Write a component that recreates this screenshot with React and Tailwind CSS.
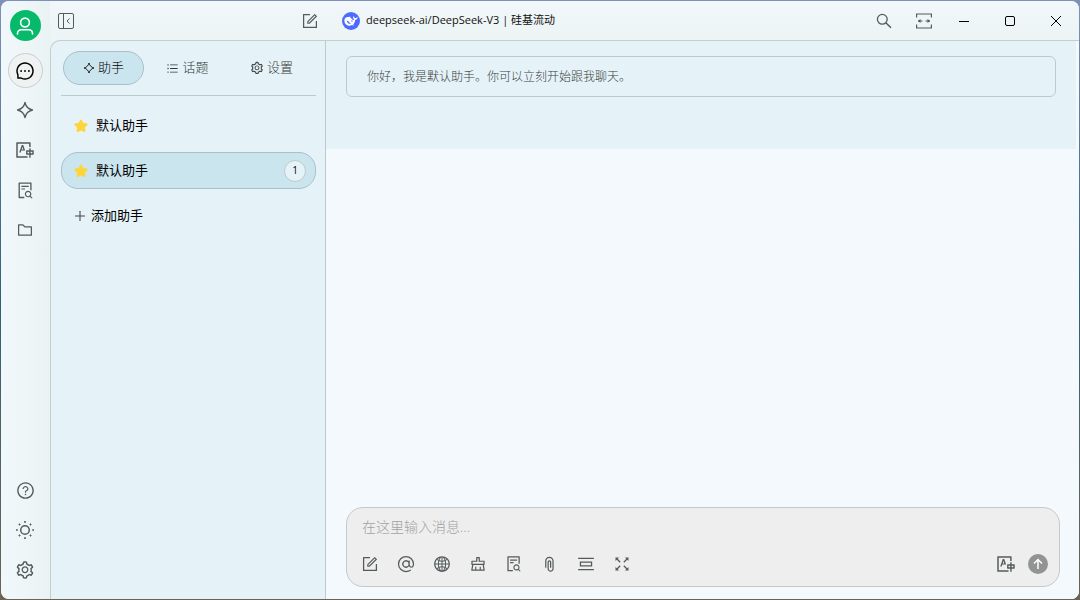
import React, { useState } from 'react';
import {
  AiOutlineMessage,
  AiOutlineTranslation,
  AiOutlineFileSearch,
  AiOutlineFolder,
  AiOutlineQuestionCircle,
  AiOutlineSetting,
  AiOutlineForm,
  AiOutlineUnorderedList,
  AiOutlinePlus,
  AiOutlineGlobal,
  AiOutlineClear,
  AiOutlinePaperClip,
  AiOutlinePicCenter,
} from 'react-icons/ai';
import { PiAt } from 'react-icons/pi';

const SparkleIcon = ({ size = 18 }) => (
  <svg width={size} height={size} viewBox="0 0 18 18" fill="none" stroke="currentColor" strokeWidth="1.3" strokeLinejoin="round">
    <path d="M9 1.5C9.800 5.200 12.800 8.200 16.500 9c-3.700.8-6.700 3.800-7.500 7.500C8.200 12.800 5.200 9.800 1.500 9 5.200 8.200 8.200 5.200 9 1.500z" />
  </svg>
);

const UserIcon = () => (
  <svg width="18" height="18" viewBox="0 0 18 18" fill="none" stroke="currentColor" strokeWidth="1.6" strokeLinecap="round">
    <circle cx="9" cy="5.500" r="4.400" />
    <path d="M1.500 17v-.5c0-2.300 1.600-3.700 3.800-3.700h7.400c2.200 0 3.800 1.400 3.800 3.700v.5" />
  </svg>
);

const SunIcon = () => (
  <svg width="20" height="20" viewBox="0 0 20 20" fill="none" stroke="currentColor" strokeWidth="1.500">
    <circle cx="10" cy="10" r="4.300" />
    <path d="M10 1v1.800M10 17.200V19M1 10h1.800M17.200 10H19M3.900 3.900l1.200 1.200M14.900 14.900l1.200 1.200M3.900 16.100l1.200-1.200M14.900 5.100l1.200-1.200" strokeWidth="1.700" />
  </svg>
);

const PanelIcon = () => (
  <svg width="16" height="16" viewBox="0 0 16 16" fill="none" stroke="currentColor" strokeWidth="1">
    <rect x=".5" y=".5" width="15" height="15" rx="1.500" />
    <path d="M5.500 .5v15M11.500 5.500L9 8l2.500 2.500" />
  </svg>
);

const SearchIcon = () => (
  <svg width="16" height="16" viewBox="0 0 16 16" fill="none" stroke="currentColor" strokeWidth="1.300">
    <circle cx="6.300" cy="6.300" r="4.900" />
    <path d="M9.800 9.800l5.200 5" strokeWidth="1.500" />
  </svg>
);

const WidthIcon = () => (
  <svg width="16" height="16" viewBox="0 0 16 16" fill="none" stroke="currentColor" strokeWidth="1.200">
    <path d="M.6 4.500v-3.500h14.800v3.500M.6 11.500V15h14.800v-3.500M2 8h4.500M9.500 8H14" />
    <path d="M4.500 6L1.800 8l2.700 2zM11.500 6l2.700 2-2.700 2z" fill="currentColor" stroke="none" />
  </svg>
);

const ExpandIcon = () => (
  <svg width="16" height="16" viewBox="0 0 16 16" fill="none" stroke="currentColor" strokeWidth="1.300">
    <path d="M3 3l3.200 3.200M13 3L9.800 6.200M3 13l3.200-3.200M13 13L9.800 9.800" />
    <path d="M1.500 1.500h3.600L1.500 5.100zM14.500 1.500v3.600l-3.600-3.600zM1.500 14.500v-3.600l3.600 3.600zM14.500 14.500h-3.600l3.600-3.600z" fill="currentColor" stroke="none" />
  </svg>
);

const StarIcon = () => (
  <svg width="14" height="14" viewBox="0 0 14 14" fill="#fdd53c" stroke="#fdd53c" strokeWidth="1.800" strokeLinejoin="round">
    <path d="M7 1.400l1.900 3.200 3.900.8-2.700 2.800.4 4L7 10.700l-3.500 1.500.4-4-2.700-2.800 3.900-.8z" />
  </svg>
);

const WhaleLogo = () => (
  <svg width="18" height="18" viewBox="0 0 18 18">
    <circle cx="9" cy="9" r="9" fill="#4d6bfe" />
    <path
      d="M15.600 5.100c-.2-.1-.3.1-.5.200-.4.500-.9.700-1.500.7-.9-.1-1.400-.5-1.700-1.300-.1-.3-.3-.5-.6-.5-.4.5-.4 1.100-.2 1.700.2.600.6 1 1 1.400-.2.500-.4.800-.7 1-1.200-.5-1.800-1.800-2.900-2.500-.5-.3-.3-.7.2-.9-.4-.4-1.400-.1-2.200.2-2.200-.3-3.800.9-4.100 3.200-.3 2.700 1.400 5 4.100 5.500 1.200.2 2.500 0 3.500-.7.600.3 1.300.4 2 .2.200-.3-.4-.4-.9-.8 1.300-1.300 1.900-2.600 2-4.400 1.400-.2 2.600-1.300 2.500-3z"
      fill="#fff"
    />
    <path d="M4.800 8.800c1.400.3 2.300 1.200 3.100 2.200.4.500.6.700 1.100.9-1.200.3-1.800-.3-2.500-.4-.9-.5-1.600-1.500-1.700-2.700z" fill="#4d6bfe" />
    <circle cx="9.900" cy="9" r=".7" fill="#4d6bfe" />
  </svg>
);

const navItems = [
  { label: '智能体', icon: <SparkleIcon /> },
  { label: '翻译', icon: <AiOutlineTranslation size={20} /> },
  { label: '知识库', icon: <AiOutlineFileSearch size={19} /> },
  { label: '文件', icon: <AiOutlineFolder size={18} /> },
];

const footItems = [
  { label: '帮助', icon: <AiOutlineQuestionCircle size={19} /> },
  { label: '主题', icon: <SunIcon /> },
  { label: '设置', icon: <AiOutlineSetting size={20} /> },
];

const tabs = [
  { label: '助手', icon: <SparkleIcon size={12} /> },
  { label: '话题', icon: <AiOutlineUnorderedList size={13} /> },
  { label: '设置', icon: <AiOutlineSetting size={14} /> },
];

const tools = [
  { label: '新话题', icon: <AiOutlineForm size={18} /> },
  { label: '提及模型', icon: <PiAt size={20} /> },
  { label: '联网', icon: <AiOutlineGlobal size={18} /> },
  { label: '清空消息', icon: <AiOutlineClear size={18} /> },
  { label: '知识库', icon: <AiOutlineFileSearch size={18} /> },
  { label: '附件', icon: <AiOutlinePaperClip size={18} className="-rotate-45" /> },
  { label: '清除上下文', icon: <AiOutlinePicCenter size={18} /> },
  { label: '展开', icon: <ExpandIcon /> },
];

const IconButton = ({ label, children, className = 'size-9 text-[#555b5c]' }) => (
  <button type="button" aria-label={label} className={`flex shrink-0 items-center justify-center ${className}`}>
    {children}
  </button>
);

const NavRail = () => (
  <nav className="flex w-[49px] shrink-0 flex-col items-center bg-linear-to-r from-[#f1f8fb] to-[#eaf3f4] pt-[9px] pr-px pb-[11px]">
    <IconButton label="用户" className="size-[31px] rounded-full bg-[#07ba6b] text-white">
      <UserIcon />
    </IconButton>
    <button type="button" aria-label="聊天" className="mt-3 flex size-[35px] items-center justify-center rounded-full border border-[#c9cdce] bg-[#f0f1f1] text-black">
      <AiOutlineMessage size={20} />
    </button>
    <div className="mt-1 flex flex-col gap-1">
      {navItems.map((item) => (
        <IconButton key={item.label} label={item.label}>{item.icon}</IconButton>
      ))}
    </div>
    <div className="mt-auto flex flex-col gap-1">
      {footItems.map((item) => (
        <IconButton key={item.label} label={item.label}>{item.icon}</IconButton>
      ))}
    </div>
  </nav>
);

const TitleBar = () => (
  <header className="flex h-[39px] shrink-0 items-center bg-linear-to-b from-[#f1f7fa] to-[#edf4f5] text-[#555b5c]">
    <div className="flex w-[276px] shrink-0 items-center justify-between pr-2">
      <IconButton label="收起侧栏" className="size-8"><PanelIcon /></IconButton>
      <IconButton label="新建话题" className="size-4"><AiOutlineForm size={18} className="shrink-0" /></IconButton>
    </div>
    <button type="button" className="ml-4 flex items-center gap-1.5 text-[11px] text-[#111]">
      <WhaleLogo />
      deepseek-ai/DeepSeek-V3 | 硅基流动
    </button>
    <div className="ml-auto flex items-center pr-[3px]">
      <IconButton label="搜索" className="size-10"><SearchIcon /></IconButton>
      <IconButton label="宽度" className="size-10"><WidthIcon /></IconButton>
      <IconButton label="最小化" className="h-8 w-10">
        <svg width="10" height="10" viewBox="0 0 10 10" stroke="#000"><path d="M0 5.500h10" /></svg>
      </IconButton>
      <IconButton label="最大化" className="h-8 w-[52px]">
        <svg width="10" height="10" viewBox="0 0 10 10" fill="none" stroke="#000"><rect x=".5" y=".5" width="9" height="9" rx="1.500" /></svg>
      </IconButton>
      <IconButton label="关闭" className="h-8 w-10">
        <svg width="10" height="10" viewBox="0 0 10 10" stroke="#000"><path d="M0 0l10 10M10 0L0 10" /></svg>
      </IconButton>
    </div>
  </header>
);

const Sidebar = () => {
  const [tab, setTab] = useState(0);
  const [active, setActive] = useState(1);

  return (
    <aside className="flex w-[275px] shrink-0 flex-col border-r border-[#bdcacd] pt-[10px] pr-[9px] pl-[10px] text-[13px]">
      <div className="flex gap-[3px] border-b border-[#bdcacd] pr-1 pb-[10px] pl-0.5 font-light">
        {tabs.map((item, i) => (
          <button
            key={i}
            type="button"
            onClick={() => setTab(i)}
            className={`flex h-[34px] flex-1 items-center justify-center gap-[3px] rounded-full border ${
              tab === i ? 'border-[#a9bfc9] bg-[#cbe5ef] text-black' : 'border-transparent text-[#333839]'
            }`}
          >
            {item.icon}
            {item.label}
          </button>
        ))}
      </div>
      <div className="mt-[11px] flex flex-col gap-2 text-black">
        {[0, 1].map((i) => (
          <button
            key={i}
            type="button"
            onClick={() => setActive(i)}
            className={`flex h-[37px] items-center gap-2 rounded-[17px] border pr-[9px] pl-3 ${
              active === i ? 'border-[#a9bfc9] bg-[#cbe5ef]' : 'border-transparent'
            }`}
          >
            <StarIcon />
            默认助手
            {active === i && (
              <span className="ml-auto flex size-[22px] items-center justify-center rounded-full border border-[#bdcacd] bg-[#e5f3f8] text-[10px]">1</span>
            )}
          </button>
        ))}
        <button type="button" className="flex h-[37px] items-center gap-1 pl-3">
          <AiOutlinePlus size={14} className="text-[#444]" />
          添加助手
        </button>
      </div>
    </aside>
  );
};

const Composer = () => (
  <form className="mr-[19px] mt-auto mb-3 ml-5 flex flex-col rounded-[17px] border border-[#c5c9c9] bg-[#edeeed] px-[15px] pt-[7px] pb-1" onSubmit={(e) => e.preventDefault()}>
    <textarea
      rows={1}
      aria-label="消息"
      placeholder="在这里输入消息..."
      className="h-6 resize-none bg-transparent text-[14px] leading-6 font-light outline-none placeholder:text-[#a0a3a3]"
    />
    <div className="mt-[7px] flex items-center">
      <div className="-ml-2.5 flex">
        {tools.map((tool) => (
          <IconButton key={tool.label} label={tool.label}>{tool.icon}</IconButton>
        ))}
      </div>
      <div className="-mr-1 ml-auto flex items-center gap-1">
        <IconButton label="翻译"><AiOutlineTranslation size={20} /></IconButton>
        <button type="submit" aria-label="发送" className="flex size-5 items-center justify-center rounded-full bg-[#929393] text-white">
          <svg width="12" height="12" viewBox="0 0 12 12" fill="none" stroke="currentColor" strokeWidth="1.500">
            <path d="M6 11V1.500M2 5.500l4-4 4 4" />
          </svg>
        </button>
      </div>
    </div>
  </form>
);

const Chat = () => (
  <main className="flex min-w-0 flex-1 flex-col bg-[#f3f9fc]">
    <div className="mr-[3px] bg-[#e5f3f8] pt-[15px] pr-5 pb-[52px] pl-5">
      <p className="rounded-md border border-[#bdcacd] px-5 py-[10px] text-[12px] leading-[19px] font-light text-[#3c4142]">
        你好，我是默认助手。你可以立刻开始跟我聊天。
      </p>
    </div>
    <Composer />
  </main>
);

const App = () => (
  <div className="h-screen bg-linear-to-b from-[#7f92b5] via-[#2f6175] to-[#6b6353] p-px font-['Open_Sans','Noto_Sans_CJK_SC',sans-serif]">
    <div className="flex h-full overflow-hidden rounded-lg bg-[#edf4f5]">
      <NavRail />
      <div className="flex min-w-0 flex-1 flex-col">
        <TitleBar />
        <div className="flex min-h-0 flex-1 overflow-hidden rounded-tl-[10px] border-t border-l border-[#c6cdcf] bg-[#e5f3f8]">
          <Sidebar />
          <Chat />
        </div>
      </div>
    </div>
  </div>
);

export default App;
